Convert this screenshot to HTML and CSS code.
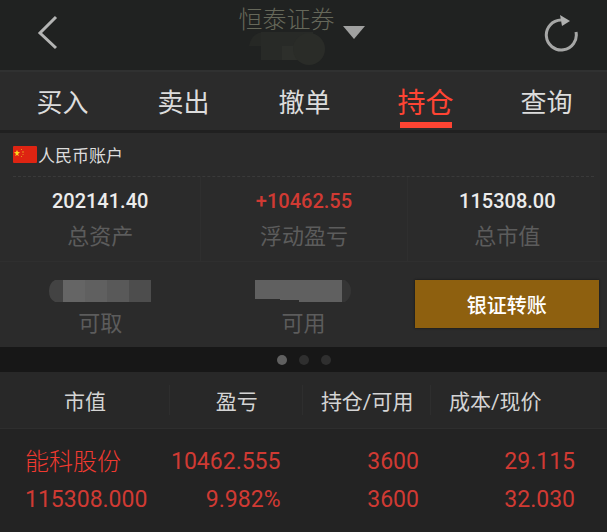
FILE: index.html
```html
<!DOCTYPE html>
<html lang="zh-CN">
<head>
  <meta charset="UTF-8" />
  <meta name="viewport" content="width=device-width, initial-scale=1.0" />
  <title>持仓</title>
  <link rel="stylesheet" href="styles.css">
</head>
<body>
  <header class="topbar">
    <button class="icon-btn" aria-label="返回">
      <svg width="24" height="36" viewBox="0 0 24 36" fill="none" stroke="#b4b5b4" stroke-width="3">
        <path d="M20 2 L4 18 L20 33" />
      </svg>
    </button>
    <button class="broker">
      <span class="broker-text">
        <span class="broker-name">恒泰证券</span>
        <svg class="broker-mask" width="76" height="34" viewBox="0 0 76 34">
          <path d="M0 14 Q3 0 16 0 H46 V14 Z" fill="#262825" />
          <path d="M12 0 H64 V28 H12 Z" fill="#282a27" />
          <path d="M33 14 H54 V28 H33 Z" fill="#2d2f2b" />
          <circle cx="60" cy="17" r="16" fill="#2a2c28" />
        </svg>
      </span>
      <svg width="22" height="14" viewBox="0 0 22 14"><path d="M0 0 H22 L11 13 Z" fill="#a0a1a0" /></svg>
    </button>
    <button class="icon-btn" aria-label="刷新">
      <svg width="36" height="38" viewBox="0 0 36 38">
        <path d="M33 18 A15 15 0 1 1 18 6" fill="none" stroke="#a6a7a6" stroke-width="3" />
        <path d="M17 1 L27 7 L19 12 Z" fill="#b0b1b0" />
      </svg>
    </button>
  </header>

  <nav class="tabs">
    <a href="#buy">买入</a>
    <a href="#sell">卖出</a>
    <a href="#cancel">撤单</a>
    <a href="#position" class="active">持仓</a>
    <a href="#query">查询</a>
  </nav>

  <section class="account">
    <div class="account-name">
      <svg width="24" height="17" viewBox="0 0 24 17">
        <rect width="24" height="17" rx="1" fill="#de2412" />
        <path d="M4 4 L5 6 L7 6 L5 8 L6 10 L4 9 L2 10 L3 8 L1 6 L3 6 Z" fill="#fbd51c" />
        <path d="M8 3 l1 1 M10 5 v2 M10 8 v1 M9 10 l-1 1" stroke="#e8911c" stroke-width="1" />
      </svg>
      <span>人民币账户</span>
    </div>
    <div class="stats">
      <div class="stat">
        <span class="value">202141.40</span>
        <span class="label">总资产</span>
      </div>
      <div class="stat">
        <span class="value up">+10462.55</span>
        <span class="label">浮动盈亏</span>
      </div>
      <div class="stat">
        <span class="value">115308.00</span>
        <span class="label">总市值</span>
      </div>
    </div>
    <div class="stats funds">
      <div class="stat">
        <svg width="102" height="22" viewBox="0 0 102 22">
          <path d="M15 0 H6 Q0 3 0 11 Q0 19 6 22 H15 Z" fill="#434343" />
          <rect x="14" width="22" height="22" fill="#656565" />
          <rect x="36" width="22" height="22" fill="#606060" />
          <rect x="58" width="22" height="22" fill="#595959" />
          <rect x="80" width="22" height="22" fill="#4d4d4d" />
        </svg>
        <span class="label">可取</span>
      </div>
      <div class="stat">
        <svg width="96" height="22" viewBox="0 0 96 22">
          <path d="M84 0 H90 Q96 4 96 11 Q96 18 90 22 H84 Z" fill="#353535" />
          <path d="M0 0 H87 V22 H44 V20 H25 V19 H0 Z" fill="#606060" />
        </svg>
        <span class="label">可用</span>
      </div>
      <div class="stat">
        <button class="transfer">银证转账</button>
      </div>
    </div>
  </section>

  <div class="dots"><i class="on"></i><i></i><i></i></div>

  <table class="positions">
    <thead>
      <tr><th>市值</th><th>盈亏</th><th>持仓/可用</th><th>成本/现价</th></tr>
    </thead>
    <tbody>
      <tr><td class="stock">能科股份</td><td>10462.555</td><td>3600</td><td>29.115</td></tr>
      <tr><td>115308.000</td><td>9.982%</td><td>3600</td><td>32.030</td></tr>
    </tbody>
  </table>
</body>
</html>
```
FILE: styles.css
```css
* { box-sizing: border-box; }
body {
  margin: 0;
  min-height: 100vh;
  background-color: #232323;
  color: #dcdcdc;
  font-family: Roboto, "Noto Sans CJK SC", sans-serif;
}
button {
  padding: 0;
  border: 0;
  background: none;
  font-family: inherit;
}
svg { display: block; }

.topbar {
  display: flex;
  justify-content: space-between;
  align-items: center;
  height: 72px;
  padding: 0 28px 4px 36px;
  background-color: #202221;
  border-bottom: 2px solid #303131;
}
.broker {
  display: flex;
  align-items: center;
  gap: 8px;
}
.broker-text {
  display: block;
  padding-top: 8px;
}
.broker-name {
  display: block;
  font-size: 24px;
  font-weight: 300;
  line-height: 24px;
  color: #66685a;
}
.broker-mask { margin-left: 10px; }

.tabs {
  display: grid;
  grid-template-columns: repeat(5, 1fr);
  height: 61px;
  padding-left: 2px;
  background-color: #2b2b2b;
  border-bottom: 3px solid #202020;
}
.tabs a {
  display: flex;
  justify-content: center;
  align-items: center;
  padding-top: 4px;
  color: #dcdcdc;
  font-size: 26px;
  line-height: 40px;
  text-decoration: none;
}
.tabs .active {
  flex-direction: column;
  justify-content: flex-end;
  padding-bottom: 2px;
  color: #ff4433;
  font-size: 28px;
  line-height: 36px;
}
.tabs .active::after {
  content: "";
  width: 52px;
  height: 6px;
  background-color: #ff4433;
}

.account { background-color: #2b2b2b; }
.account-name {
  display: flex;
  align-items: center;
  gap: 1px;
  height: 44px;
  margin: 0 13px;
  border-bottom: 1px dashed #3a3a3a;
  font-size: 17px;
}
.stats {
  display: grid;
  grid-template-columns: 33% 34% 33%;
  height: 85px;
  border-bottom: 1px solid #2f2f2f;
}
.stat {
  display: flex;
  flex-direction: column;
  align-items: center;
  padding-top: 12px;
}
.stat + .stat { border-left: 1px solid #2f2f2f; }
.value {
  color: #ececec;
  font-size: 20px;
  font-weight: 500;
  line-height: 24px;
}
.up { color: #d03a33; }
.label {
  margin-top: 8px;
  color: #5c5c5c;
  font-size: 22px;
  line-height: 32px;
}
.funds { border-bottom: 0; }
.funds .stat {
  padding-top: 18px;
  border-left: 0;
}
.funds .label { margin-top: 6px; }
.transfer {
  width: 184px;
  height: 48px;
  background-color: #8e600f;
  box-shadow: 0 0 2px #111;
  color: #fff;
  font-size: 20px;
  font-weight: 500;
}

.dots {
  display: flex;
  justify-content: center;
  align-items: center;
  gap: 12px;
  height: 25px;
  background-color: #171717;
}
.dots i {
  width: 10px;
  height: 10px;
  border-radius: 50%;
  background-color: #2f2f2f;
}
.dots .on { background-color: #606060; }

.positions {
  width: 100%;
  table-layout: fixed;
  border-collapse: collapse;
}
.positions th {
  height: 56px;
  padding: 0;
  background: linear-gradient(#2e2e2e, #2e2e2e) right center / 1px 30px no-repeat #282828;
  border-bottom: 1px solid #2e2e2e;
  color: #d4d4d4;
  font-size: 21px;
  font-weight: 400;
}
.positions th:nth-child(1) { width: 28%; }
.positions th:nth-child(2) { width: 22%; }
.positions th:nth-child(3) { width: 21%; }
.positions th:last-child {
  padding-left: 18px;
  background: #282828;
  text-align: left;
}
.positions td {
  height: 38px;
  padding: 0;
  color: #d03a33;
  font-size: 23px;
  line-height: 38px;
  text-align: right;
}
.positions tbody::before {
  content: "";
  display: block;
  height: 14px;
}
.positions td:nth-child(1) {
  padding-left: 25px;
  text-align: left;
}
.positions td:nth-child(2) { padding-right: 23px; }
.positions td:nth-child(3) { padding-right: 12px; }
.positions td:nth-child(4) { padding-right: 32px; }
.positions .stock {
  color: #f03a30;
  font-size: 24px;
  font-weight: 300;
}
```
